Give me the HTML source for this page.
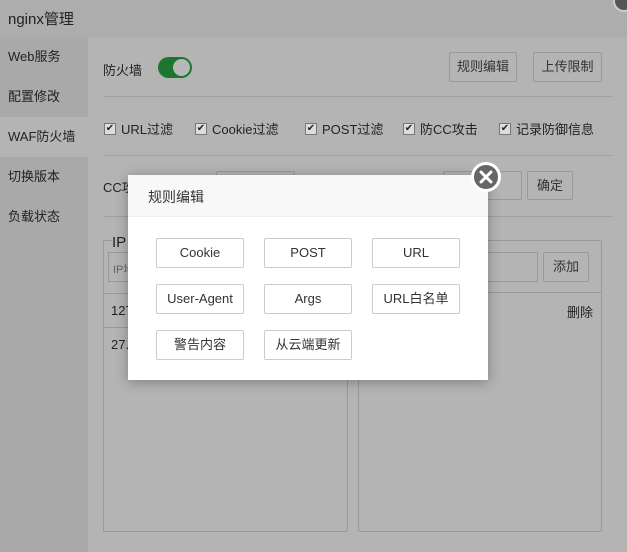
<!DOCTYPE html>
<html><head><meta charset="utf-8"><style>
*{margin:0;padding:0;box-sizing:border-box}
body{width:627px;height:552px;overflow:hidden;position:relative;background:#b4b4b4;font-family:"Liberation Sans","Noto Sans CJK SC",sans-serif;font-size:13px;color:#222}
.a{position:absolute}
.top{left:0;top:0;width:627px;height:37px;background:#adadad;font-size:15px;padding:8px 0 0 8px;color:#222}
.side{left:0;top:37px;width:88px;height:515px;background:#a9a9a9}
.si{position:absolute;left:0;width:88px;height:40px;line-height:40px;padding-left:8px;color:#222}
.btn{position:absolute;border:1px solid #999;border-radius:2px;text-align:center;color:#333}
.line{position:absolute;left:103px;width:510px;height:1px;background:#a0a0a0}
.cb{position:absolute;top:119px;display:flex;align-items:center;color:#222}
.cb i{display:inline-block;width:12px;height:12px;background:#ddd;border:1px solid #777;margin-right:5px;font-style:normal;font-size:10px;line-height:10px;text-align:center}
.dlg{left:128px;top:175px;width:360px;height:205px;background:#fff;box-shadow:0 2px 12px rgba(0,0,0,.3)}
.dh{height:42px;background:#f8f8f8;border-bottom:1px solid #eee;padding:12px 0 0 20px;font-size:14px;color:#333}
.db{position:absolute;width:88px;height:30px;border:1px solid #ccc;border-radius:2px;line-height:28px;text-align:center;color:#333;font-size:13px;background:#fff}
</style></head><body>
<div class="a top">nginx管理</div>
<div class="a side">
<div class="si" style="top:0">Web服务</div>
<div class="si" style="top:40px">配置修改</div>
<div class="si" style="top:80px;background:#b4b4b4">WAF防火墙</div>
<div class="si" style="top:120px">切换版本</div>
<div class="si" style="top:160px">负载状态</div>
</div>
<div class="a" style="left:103px;top:60px">防火墙</div>
<div class="a" style="left:158px;top:57px;width:34px;height:21px;border-radius:11px;background:#1d7630"><div style="position:absolute;right:2px;top:2px;width:17px;height:17px;border-radius:50%;background:#b8b8b8"></div></div>
<div class="btn" style="left:449px;top:52px;width:68px;height:30px;line-height:28px">规则编辑</div>
<div class="btn" style="left:533px;top:52px;width:69px;height:30px;line-height:28px">上传限制</div>
<div class="line" style="top:96px"></div>
<div class="cb" style="left:104px"><i>✔</i>URL过滤</div>
<div class="cb" style="left:195px"><i>✔</i>Cookie过滤</div>
<div class="cb" style="left:305px"><i>✔</i>POST过滤</div>
<div class="cb" style="left:403px"><i>✔</i>防CC攻击</div>
<div class="cb" style="left:499px"><i>✔</i>记录防御信息</div>
<div class="line" style="top:155px"></div>
<div class="a" style="left:103px;top:177px">CC攻击</div>
<div class="btn" style="left:216px;top:171px;width:79px;height:29px"></div>
<div class="btn" style="left:443px;top:171px;width:79px;height:29px"></div>
<div class="btn" style="left:527px;top:171px;width:46px;height:29px;line-height:27px">确定</div>
<div class="line" style="top:216px"></div>
<div class="a" style="left:103px;top:240px;width:245px;height:292px;border:1px solid #999;border-radius:2px"></div>
<div class="a" style="left:112px;top:231px;font-size:15px;background:#b4b4b4">IP白名单</div>
<div class="a" style="left:108px;top:252px;width:120px;height:30px;border:1px solid #999;font-size:11px;padding:8px 4px;color:#666">IP地址</div>
<div class="a" style="left:104px;top:293px;width:243px;height:1px;background:#999"></div>
<div class="a" style="left:111px;top:303px">127.0.0.1</div>
<div class="a" style="left:104px;top:327px;width:243px;height:1px;background:#999"></div>
<div class="a" style="left:111px;top:337px">27.0.0.1</div>
<div class="a" style="left:358px;top:240px;width:244px;height:292px;border:1px solid #999;border-radius:2px"></div>
<div class="a" style="left:400px;top:252px;width:138px;height:30px;border:1px solid #999"></div>
<div class="btn" style="left:543px;top:252px;width:46px;height:30px;line-height:28px">添加</div>
<div class="a" style="left:359px;top:292px;width:242px;height:1px;background:#999"></div>
<div class="a" style="left:567px;top:302px">删除</div>
<div class="a dlg"><div class="dh">规则编辑</div>
<div class="db" style="left:28px;top:63px">Cookie</div>
<div class="db" style="left:136px;top:63px">POST</div>
<div class="db" style="left:244px;top:63px">URL</div>
<div class="db" style="left:28px;top:109px">User-Agent</div>
<div class="db" style="left:136px;top:109px">Args</div>
<div class="db" style="left:244px;top:109px">URL白名单</div>
<div class="db" style="left:28px;top:155px">警告内容</div>
<div class="db" style="left:136px;top:155px">从云端更新</div>
</div>
<div class="a" style="left:471px;top:162px;width:30px;height:30px;border-radius:50%;background:#666;border:3px solid #fff">
<svg width="24" height="24" viewBox="0 0 24 24" style="position:absolute;left:0;top:0"><path d="M7 7L17 17M17 7L7 17" stroke="#fff" stroke-width="3" stroke-linecap="round"/></svg></div>
<div class="a" style="left:613px;top:-10px;width:22px;height:22px;border-radius:50%;background:#555;border:2px solid #ccc"></div>
</body></html>
